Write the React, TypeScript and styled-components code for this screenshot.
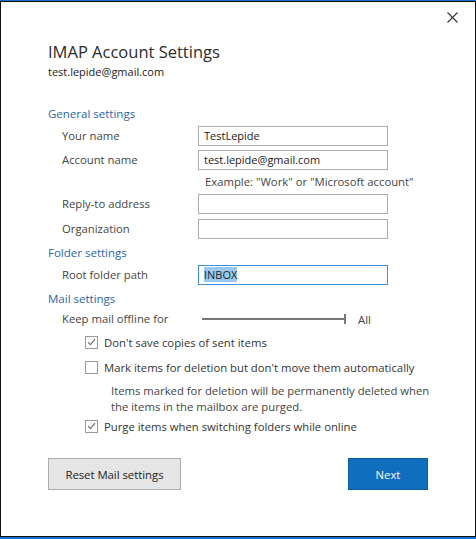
import styled, { createGlobalStyle } from 'styled-components'

const Global = createGlobalStyle`
  html, body {
    margin: 0;
    padding: 0;
    background: #ffffff;
  }
  body {
    font-family: 'Segoe UI', 'Open Sans', 'Noto Sans', sans-serif;
    color: #333333;
  }
`

const Frame = styled.div`
  box-sizing: border-box;
  width: 476px;
  height: 539px;
  border-top: 1px solid #1a6fc4;
  border-bottom: 2px solid #1a6fc4;
`
const Window = styled.div`
  position: relative;
  box-sizing: border-box;
  height: 100%;
  border: 1px solid #111111;
  background: #ffffff;
  padding: 38px 0 0 47px;
`
const CloseButton = styled.div`
  position: absolute;
  top: 9px;
  right: 17px;
  width: 12px;
  height: 12px;
  display: flex;
  align-items: center;
  justify-content: center;
`
const Title = styled.div`
  font-size: 16.5px;
  line-height: 24px;
  color: #2b2b2b;
`
const Email = styled.div`
  font-size: 11px;
  line-height: 16px;
  color: #222222;
`
const SectionTitle = styled.div<{ $top: number }>`
  margin-top: ${(p) => p.$top}px;
  font-size: 11.5px;
  line-height: 16px;
  color: #2a65a8;
`
const FieldGrid = styled.div`
  display: grid;
  grid-template-columns: 136px 190px;
  padding-left: 14px;
  align-items: center;
`
const Label = styled.div`
  font-size: 11.3px;
  line-height: 16px;
  color: #444444;
`
const Input = styled.div<{ $focused?: boolean }>`
  box-sizing: border-box;
  height: 20px;
  border: 1px solid ${(p) => (p.$focused ? '#3f8fdd' : '#acacac')};
  font-size: 11px;
  line-height: 18px;
  padding-left: 5px;
  color: #222222;
`
const Row = styled.div<{ $gap: number }>`
  display: contents;
  & > * {
    margin-top: ${(p) => p.$gap}px;
  }
`
const Hint = styled.div`
  grid-column: 2 / span 1;
  margin-top: 4px;
  padding-left: 7px;
  white-space: nowrap;
  font-size: 11.3px;
  line-height: 16px;
  color: #444444;
`
const Selected = styled.span`
  background: #99c9ef;
  color: #222222;
`
const SliderRow = styled.div`
  display: flex;
  align-items: center;
  margin-top: 4px;
  padding-left: 14px;
`
const SliderLabel = styled(Label)`
  width: 140px;
`
const Track = styled.div`
  position: relative;
  width: 144px;
  height: 2px;
  background: #777777;
  &::after {
    content: '';
    position: absolute;
    right: 0;
    top: -4px;
    width: 2px;
    height: 10px;
    background: #777777;
  }
`
const SliderValue = styled.span`
  margin-left: 12px;
  font-size: 11.3px;
  color: #444444;
`
const CheckList = styled.div`
  display: flex;
  flex-direction: column;
  padding-left: 37px;
  margin-top: 7px;
`
const CheckRow = styled.div<{ $top: number }>`
  display: flex;
  align-items: center;
  gap: 6px;
  margin-top: ${(p) => p.$top}px;
  height: 16px;
`
const Box = styled.div`
  box-sizing: border-box;
  width: 13px;
  height: 13px;
  border: 1px solid #9a9a9a;
  background: #ffffff;
  display: flex;
  align-items: center;
  justify-content: center;
`
const CheckText = styled.span`
  font-size: 11.3px;
  color: #333333;
`
const Description = styled.div`
  margin-top: 8px;
  padding-left: 26px;
  font-size: 11.3px;
  line-height: 16px;
  color: #444444;
`
const Buttons = styled.div`
  display: flex;
  justify-content: space-between;
  width: 380px;
  margin-top: 24px;
`
const Button = styled.div<{ $primary?: boolean }>`
  box-sizing: border-box;
  height: 32px;
  display: flex;
  align-items: center;
  justify-content: center;
  white-space: nowrap;
  font-size: 11.3px;
  width: ${(p) => (p.$primary ? 80 : 133)}px;
  background: ${(p) => (p.$primary ? '#106ebe' : '#e5e5e5')};
  color: ${(p) => (p.$primary ? '#ffffff' : '#222222')};
  border: 1px solid ${(p) => (p.$primary ? '#0c5ea8' : '#adadad')};
`

const Check = () => (
  <svg width="9" height="8" viewBox="0 0 9 8">
    <path d="M1 4.2 L3.4 6.6 L8 1.2" fill="none" stroke="#6a6a6a" strokeWidth="1.1" />
  </svg>
)

const App = () => {
  return (
    <Frame>
      <Global />
      <Window>
        <CloseButton>
          <svg width="11" height="11" viewBox="0 0 11 11">
            <path d="M0.5 0.5 L10.5 10.5 M10.5 0.5 L0.5 10.5" stroke="#333" strokeWidth="1.1" />
          </svg>
        </CloseButton>
        <Title>IMAP Account Settings</Title>
        <Email>test.lepide@gmail.com</Email>

        <SectionTitle $top={26}>General settings</SectionTitle>
        <FieldGrid>
          <Row $gap={4}>
            <Label>Your name</Label>
            <Input>TestLepide</Input>
          </Row>
          <Row $gap={4}>
            <Label>Account name</Label>
            <Input>test.lepide@gmail.com</Input>
          </Row>
          <Hint>Example: "Work" or "Microsoft account"</Hint>
          <Row $gap={4}>
            <Label>Reply-to address</Label>
            <Input />
          </Row>
          <Row $gap={5}>
            <Label>Organization</Label>
            <Input />
          </Row>
        </FieldGrid>

        <SectionTitle $top={6}>Folder settings</SectionTitle>
        <FieldGrid>
          <Row $gap={4}>
            <Label>Root folder path</Label>
            <Input $focused>
              <Selected>INBOX</Selected>
            </Input>
          </Row>
        </FieldGrid>

        <SectionTitle $top={6}>Mail settings</SectionTitle>
        <SliderRow>
          <SliderLabel>Keep mail offline for</SliderLabel>
          <Track />
          <SliderValue>All</SliderValue>
        </SliderRow>

        <CheckList>
          <CheckRow $top={0}>
            <Box>
              <Check />
            </Box>
            <CheckText>Don't save copies of sent items</CheckText>
          </CheckRow>
          <CheckRow $top={9}>
            <Box />
            <CheckText>Mark items for deletion but don't move them automatically</CheckText>
          </CheckRow>
          <Description>
            Items marked for deletion will be permanently deleted when
            <br />
            the items in the mailbox are purged.
          </Description>
          <CheckRow $top={3}>
            <Box>
              <Check />
            </Box>
            <CheckText>Purge items when switching folders while online</CheckText>
          </CheckRow>
        </CheckList>

        <Buttons>
          <Button>Reset Mail settings</Button>
          <Button $primary>Next</Button>
        </Buttons>
      </Window>
    </Frame>
  )
}

export default App
